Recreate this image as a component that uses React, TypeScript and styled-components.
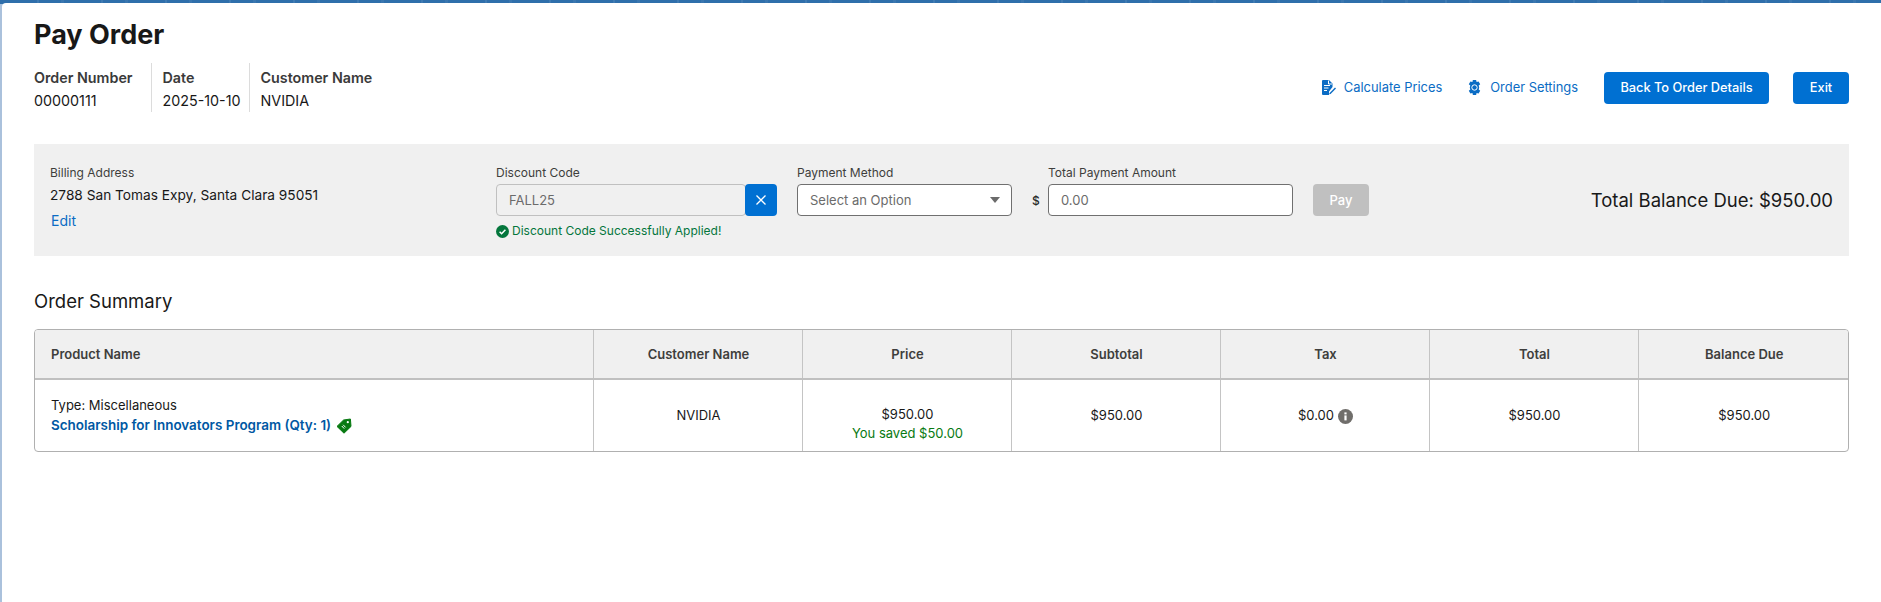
import styled, { createGlobalStyle } from 'styled-components';

const GlobalStyle = createGlobalStyle`
  html, body {
    margin: 0;
    height: 100%;
    background: #2f6fab;
  }
  body {
    font-family: Inter, "Liberation Sans", sans-serif;
    color: #181818;
    -webkit-font-smoothing: antialiased;
  }
  * { box-sizing: border-box; }
`;

const Shell = styled.div`
  height: 602px;
  overflow: hidden;
  padding: 3px 0 0 2px;
  background:
    repeating-linear-gradient(90deg, transparent 0 37px, rgba(255, 255, 255, 0.08) 37px 39px, transparent 39px 61px, rgba(255, 255, 255, 0.05) 61px 64px) 0 0 / 100% 3px no-repeat,
    linear-gradient(#2f6fab 0 4px, #aac1dc 4px);
`;

const Page = styled.main`
  height: 100%;
  background: #fff;
  border-top-left-radius: 4px;
  padding: 15px 32px 0 32px;
`;

const Title = styled.h1`
  margin: 0;
  font-size: 27px;
  line-height: 34px;
  font-weight: 700;
  color: #181818;
`;

const Header = styled.header`
  display: flex;
  align-items: center;
  justify-content: space-between;
  margin-top: 11px;
`;

const Meta = styled.dl`
  display: flex;
  margin: 0;
`;

const MetaItem = styled.div`
  height: 49px;
  padding: 5px 8px 0 11px;
  border-left: 1px solid #dcdcdc;

  &:first-child {
    padding-left: 0;
    padding-right: 18px;
    border-left: 0;
  }
`;

const MetaLabel = styled.dt`
  font-size: 14.3px;
  line-height: 20px;
  font-weight: 600;
  color: #3a3a3a;
`;

const MetaValue = styled.dd`
  margin: 3px 0 0;
  font-size: 14.3px;
  line-height: 20px;
  color: #181818;
`;

const Actions = styled.div`
  display: flex;
  align-items: center;
`;

const TextAction = styled.a`
  display: flex;
  align-items: center;
  gap: 8px;
  margin-right: 26px;
  font-size: 12.9px;
  color: #0b6cc4;

  &:first-child {
    margin-right: 25px;
  }
`;

const BrandButton = styled.button<{ $width: number; $gap?: number }>`
  width: ${(p) => p.$width}px;
  height: 32px;
  margin-left: ${(p) => p.$gap ?? 0}px;
  padding: 0;
  border: 0;
  border-radius: 4px;
  background: #0070d2;
  color: #fff;
  font: 500 12.8px Inter, sans-serif;
`;

const Panel = styled.section`
  display: flex;
  align-items: flex-start;
  height: 112px;
  margin-top: 32px;
  padding: 20px 16px 0;
  background: #f0f0f0;
`;

const Billing = styled.div`
  width: 446px;
  flex: none;
`;

const BillingLabel = styled.div`
  font-size: 12px;
  line-height: 18px;
  color: #3e3e3c;
`;

const Address = styled.div`
  margin-top: 3px;
  font-size: 13.7px;
  line-height: 20px;
  color: #181818;
`;

const EditLink = styled.a`
  display: block;
  margin: 7px 0 0 1px;
  font-size: 14px;
  line-height: 18px;
  color: #0b6cc4;
`;

const Field = styled.div<{ $width: number; $gap?: number }>`
  width: ${(p) => p.$width}px;
  margin-left: ${(p) => p.$gap ?? 0}px;
  flex: none;
`;

const FieldLabel = styled.label`
  display: block;
  height: 20px;
  font-size: 12px;
  line-height: 18px;
  color: #3e3e3c;
`;

const InputGroup = styled.div`
  display: flex;
  height: 32px;
`;

const TextBox = styled.div<{ $disabled?: boolean }>`
  display: flex;
  align-items: center;
  justify-content: space-between;
  flex: 1;
  height: 32px;
  padding: 0 12px;
  border: 1px solid ${(p) => (p.$disabled ? '#c0c0c0' : '#707070')};
  border-radius: 4px;
  background: ${(p) => (p.$disabled ? '#f0f0f0' : '#fff')};
  font-size: 13px;
  color: #6b6b6b;
`;

const ClearButton = styled.button`
  display: flex;
  align-items: center;
  justify-content: center;
  width: 32px;
  height: 32px;
  margin-left: -1px;
  padding: 0;
  border: 0;
  border-radius: 4px;
  background: #0070d2;
`;

const SuccessMessage = styled.div`
  display: flex;
  align-items: center;
  gap: 3px;
  margin-top: 6px;
  font-size: 12px;
  line-height: 18px;
  color: #04763c;
`;

const Caret = styled.span`
  width: 0;
  height: 0;
  margin-right: -1px;
  border-left: 5px solid transparent;
  border-right: 5px solid transparent;
  border-top: 6px solid #6b6b6b;
`;

const Dollar = styled.span`
  display: flex;
  align-items: center;
  width: 16px;
  height: 32px;
  margin: 20px 0 0 20px;
  flex: none;
  font-size: 12px;
  font-weight: 500;
  color: #2b2b2b;
`;

const PayButton = styled.button`
  width: 56px;
  height: 32px;
  margin: 20px 0 0 20px;
  padding: 0;
  border: 0;
  border-radius: 4px;
  background: #c0c0c0;
  color: #fff;
  font: 500 13px Inter, sans-serif;
`;

const BalanceDue = styled.div`
  margin: 24px 0 0 auto;
  font-size: 18.5px;
  line-height: 24px;
  color: #181818;
`;

const SectionTitle = styled.h2`
  margin: 33px 0 0;
  font-size: 18.5px;
  line-height: 24px;
  font-weight: 400;
  color: #181818;
`;

const TableFrame = styled.div`
  margin-top: 16px;
  border: 1px solid #b0b0b0;
  border-radius: 4px;
  overflow: hidden;
`;

const Table = styled.table`
  width: 100%;
  border-collapse: collapse;
  table-layout: fixed;
`;

const Th = styled.th`
  height: 49px;
  padding: 0 15px 0 17px;
  background: #f0f0f0;
  border-left: 1px solid #c4c4c4;
  border-bottom: 2px solid #c0c0c0;
  font-size: 13px;
  font-weight: 600;
  color: #3e3e3c;
  text-align: center;

  &:first-child {
    padding: 0 16px;
    border-left: 0;
    text-align: left;
  }
`;

const Td = styled.td<{ $offset?: number }>`
  height: 72px;
  padding: ${(p) => p.$offset ?? 0}px 15px 0 17px;
  border-left: 1px solid #c4c4c4;
  font-size: 13px;
  line-height: 19px;
  color: #181818;
  text-align: center;

  &:first-child {
    padding: 0 16px;
    border-left: 0;
    text-align: left;
  }
`;

const ProductLink = styled.a`
  display: flex;
  align-items: center;
  gap: 5px;
  margin-top: 1px;
  font-size: 13.45px;
  font-weight: 600;
  color: #0058a3;
`;

const Saved = styled.div`
  color: #087a12;
`;

const TaxCell = styled.span`
  display: inline-flex;
  align-items: center;
  gap: 4px;
`;

const columns = [558, 209, 209, 209, 209, 209, 210];

function CalcIcon() {
  return (
    <svg width="14" height="15" viewBox="0 0 14 15" fill="#0b6cc4">
      <path d="M0 1a1 1 0 0 1 1-1h6l3.5 3.5V7L7 11.5V15H1a1 1 0 0 1-1-1z" />
      <path d="M2 5.5h6M2 8h4.5M2 10.5h3M6.5 0.5v3.5h3.5" stroke="#fff" strokeWidth="1" fill="none" />
      <path d="M7.6 13 13 7.4l1 1.1-5.4 5.4-1.4.3z" />
    </svg>
  );
}

function GearIcon() {
  return (
    <svg width="15" height="15" viewBox="0 0 15 15">
      <path
        fill="#0b6cc4"
        d="M5.9 0h3.2l.5 2 2-.6 1.6 2.8-1.5 1.4.5 1.9-.5 1.9 1.5 1.4-1.6 2.8-2-.6-.5 2H5.9l-.5-2-2 .6-1.6-2.8 1.5-1.4-.5-1.9.5-1.9L1.8 4.200l1.6-2.8 2 .6z"
      />
      <circle cx="7.500" cy="7.500" r="2.700" fill="none" stroke="#fff" strokeWidth="1" />
    </svg>
  );
}

function CloseIcon() {
  return (
    <svg width="12" height="12" viewBox="0 0 12 12">
      <path d="M1.5 1.5l9 9M10.5 1.5l-9 9" stroke="#fff" strokeWidth="1.3" fill="none" />
    </svg>
  );
}

function CheckIcon() {
  return (
    <svg width="13" height="13" viewBox="0 0 13 13">
      <circle cx="6.5" cy="6.5" r="6.5" fill="#04763c" />
      <path d="M3.6 6.8l2 2 3.8-4" stroke="#fff" strokeWidth="1.5" fill="none" />
    </svg>
  );
}

function TagIcon() {
  return (
    <svg width="16" height="16" viewBox="0 0 16 16">
      <path
        fill="#087a12"
        stroke="#087a12"
        strokeLinejoin="round"
        d="M8 15.2 1 8.4 7.6 2l6.8-1 .6 7.4z"
      />
      <circle cx="11.8" cy="4.2" r="1.1" fill="#fff" />
      <path d="M5.8 8 8.2 10.6M7.2 6.8l2.4 2.6" stroke="#fff" strokeWidth="1" />
    </svg>
  );
}

function InfoIcon() {
  return (
    <svg width="15" height="15" viewBox="0 0 15 15" style={{ marginTop: 2 }}>
      <circle cx="7.5" cy="7.5" r="7.5" fill="#706e6b" />
      <rect x="6.4" y="6.4" width="2.2" height="5" fill="#fff" />
      <rect x="6.4" y="3.4" width="2.2" height="2" fill="#fff" />
    </svg>
  );
}

function App() {
  return (
    <>
      <GlobalStyle />
      <Shell>
        <Page>
          <Title>Pay Order</Title>
          <Header>
            <Meta>
              <MetaItem>
                <MetaLabel>Order Number</MetaLabel>
                <MetaValue>00000111</MetaValue>
              </MetaItem>
              <MetaItem>
                <MetaLabel>Date</MetaLabel>
                <MetaValue>2025-10-10</MetaValue>
              </MetaItem>
              <MetaItem>
                <MetaLabel>Customer Name</MetaLabel>
                <MetaValue>NVIDIA</MetaValue>
              </MetaItem>
            </Meta>
            <Actions>
              <TextAction>
                <CalcIcon />
                Calculate Prices
              </TextAction>
              <TextAction>
                <GearIcon />
                Order Settings
              </TextAction>
              <BrandButton $width={165}>Back To Order Details</BrandButton>
              <BrandButton $width={56} $gap={24}>
                Exit
              </BrandButton>
            </Actions>
          </Header>

          <Panel>
            <Billing>
              <BillingLabel>Billing Address</BillingLabel>
              <Address>2788 San Tomas Expy, Santa Clara 95051</Address>
              <EditLink>Edit</EditLink>
            </Billing>
            <Field $width={281}>
              <FieldLabel>Discount Code</FieldLabel>
              <InputGroup>
                <TextBox $disabled>FALL25</TextBox>
                <ClearButton>
                  <CloseIcon />
                </ClearButton>
              </InputGroup>
              <SuccessMessage>
                <CheckIcon />
                Discount Code Successfully Applied!
              </SuccessMessage>
            </Field>
            <Field $width={215} $gap={20}>
              <FieldLabel>Payment Method</FieldLabel>
              <TextBox>
                Select an Option
                <Caret />
              </TextBox>
            </Field>
            <Dollar>$</Dollar>
            <Field $width={245}>
              <FieldLabel>Total Payment Amount</FieldLabel>
              <TextBox>0.00</TextBox>
            </Field>
            <PayButton>Pay</PayButton>
            <BalanceDue>Total Balance Due: $950.00</BalanceDue>
          </Panel>

          <SectionTitle>Order Summary</SectionTitle>
          <TableFrame>
            <Table>
              <colgroup>
                {columns.map((width, i) => (
                  <col key={i} style={{ width }} />
                ))}
              </colgroup>
              <thead>
                <tr>
                  <Th>Product Name</Th>
                  <Th>Customer Name</Th>
                  <Th>Price</Th>
                  <Th>Subtotal</Th>
                  <Th>Tax</Th>
                  <Th>Total</Th>
                  <Th>Balance Due</Th>
                </tr>
              </thead>
              <tbody>
                <tr>
                  <Td>
                    <div>Type: Miscellaneous</div>
                    <ProductLink>
                      Scholarship for Innovators Program (Qty: 1)
                      <TagIcon />
                    </ProductLink>
                  </Td>
                  <Td>NVIDIA</Td>
                  <Td $offset={17}>
                    <div>$950.00</div>
                    <Saved>You saved $50.00</Saved>
                  </Td>
                  <Td>$950.00</Td>
                  <Td>
                    <TaxCell>
                      $0.00
                      <InfoIcon />
                    </TaxCell>
                  </Td>
                  <Td>$950.00</Td>
                  <Td>$950.00</Td>
                </tr>
              </tbody>
            </Table>
          </TableFrame>
        </Page>
      </Shell>
    </>
  );
}

export default App;
